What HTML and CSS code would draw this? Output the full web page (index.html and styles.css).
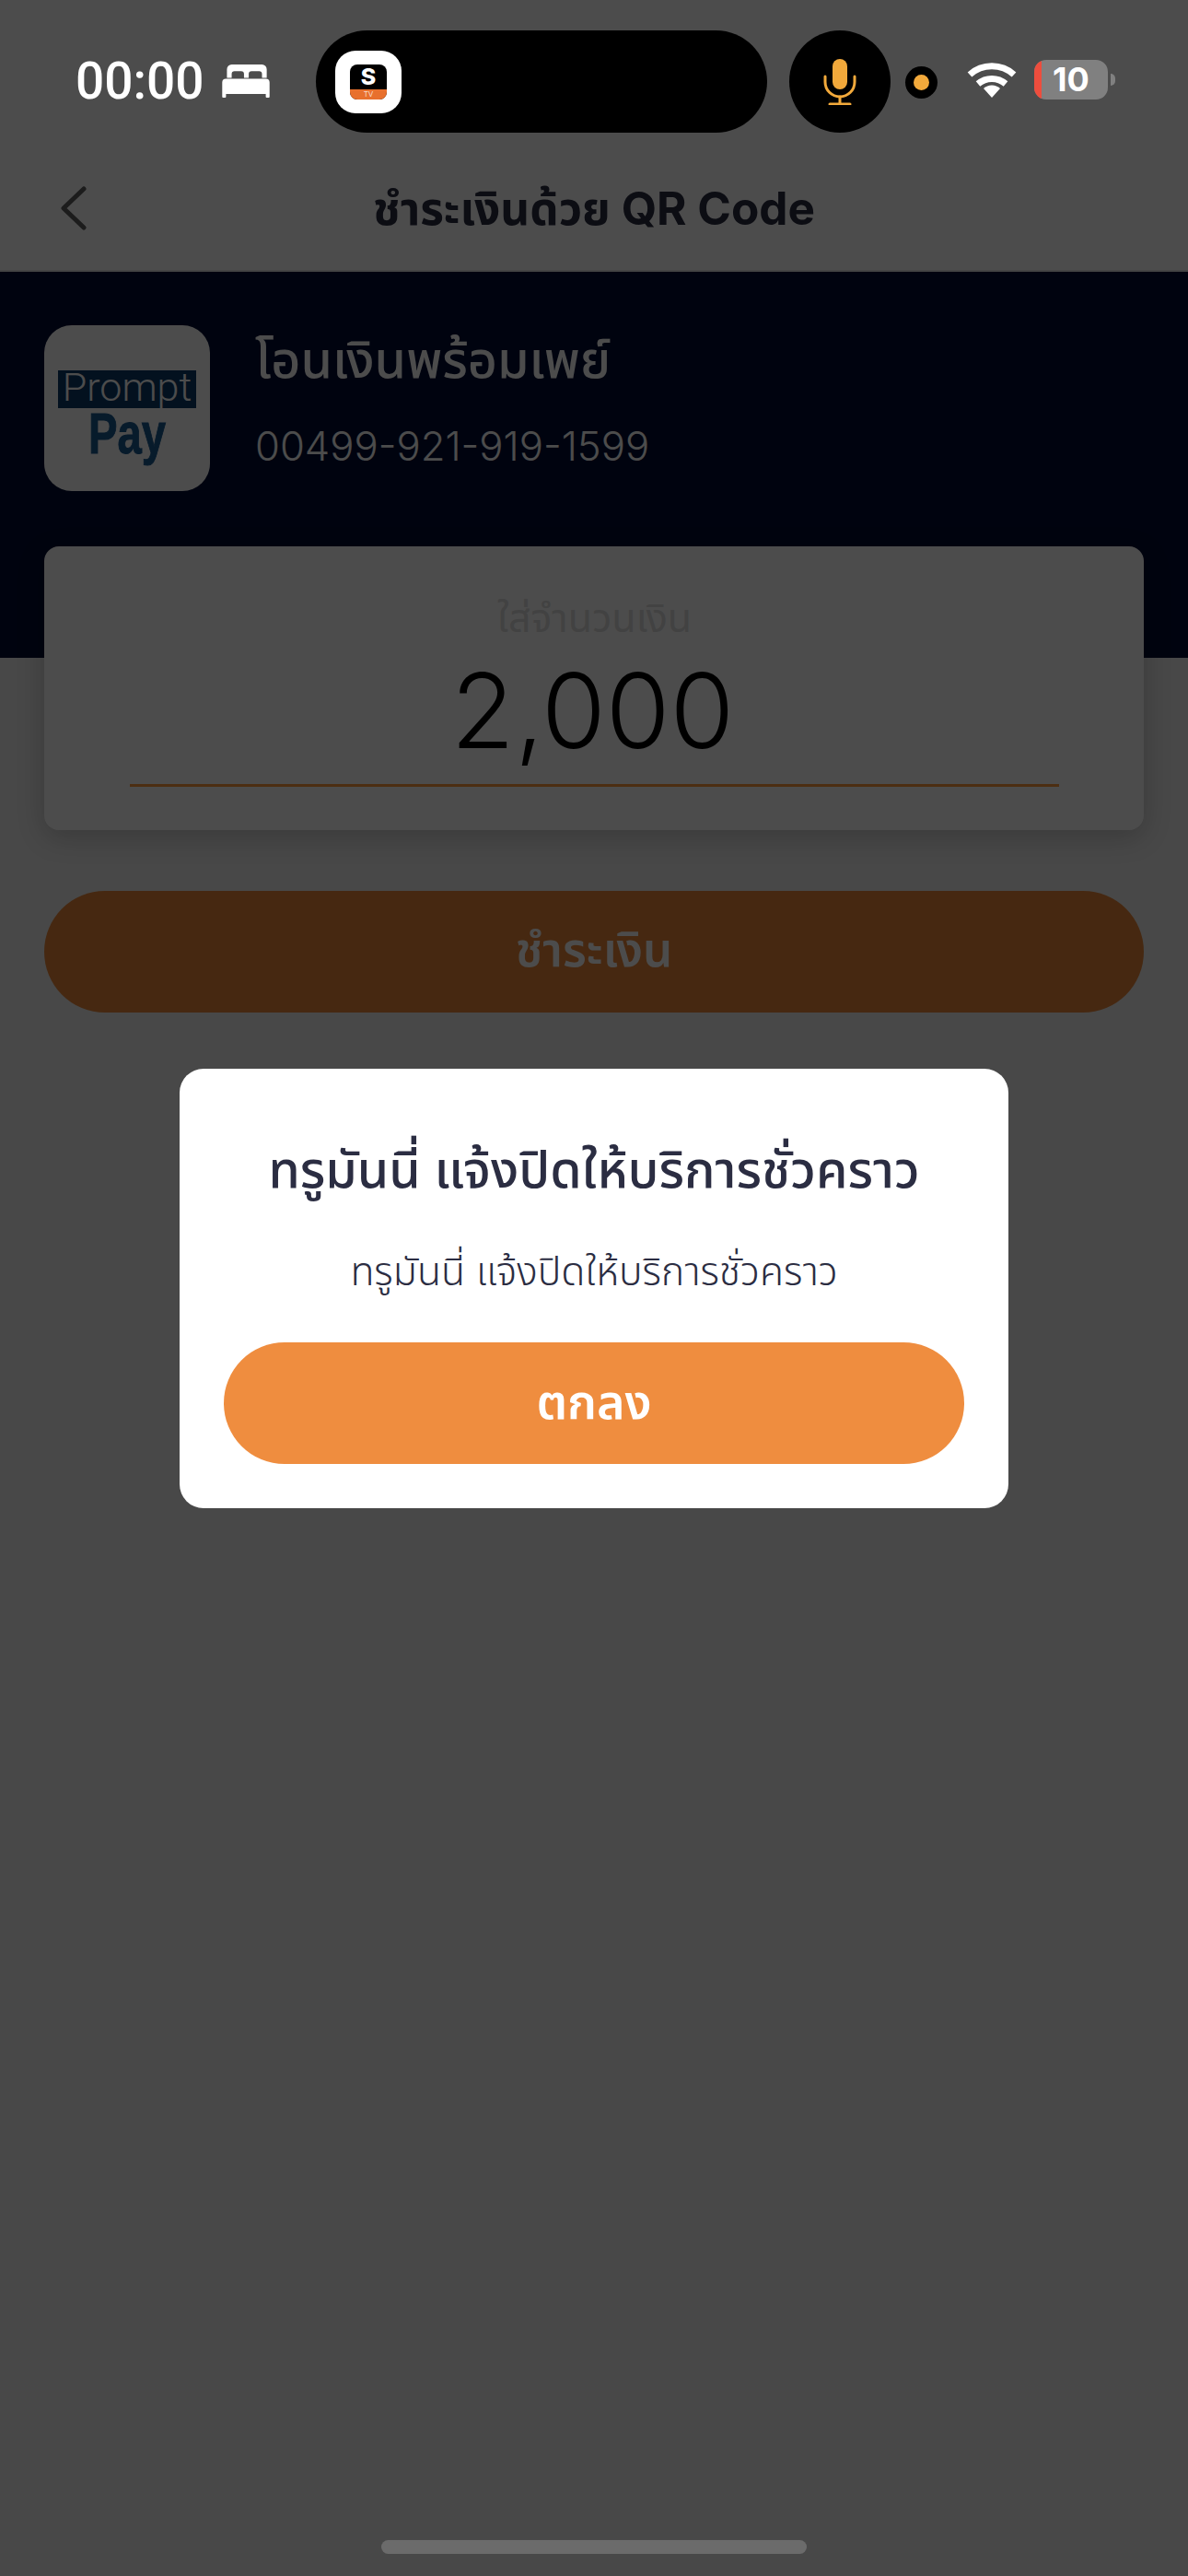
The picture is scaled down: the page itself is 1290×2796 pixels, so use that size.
FILE: index.html
```html
<!DOCTYPE html>
<html lang="th">

<head>
    <meta charset="UTF-8">
    <meta name="viewport" content="width=device-width, initial-scale=1.0">
    <title>ชำระเงินด้วย QR Code</title>
    <link rel="stylesheet" href="styles.css">
</head>

<body>
    <div class="status-bar">
        <div class="status-time">
            <span>00:00</span>
            <svg class="bed-icon" viewBox="0 0 50 35" fill="#fff">
                <path fill-rule="evenodd" d="M10 0h32a5 5 0 0 1 5 5v9H42v-4a3 3 0 0 0-3-3H31a3 3 0 0 0-3 3v4h-5v-4a3 3 0 0 0-3-3H13a3 3 0 0 0-3 3v4H5V5a5 5 0 0 1 5-5z" />
                <path d="M4 15h42a4 4 0 0 1 4 4v15a1 1 0 0 1-1 1h-2a1 1 0 0 1-1-1v-3H4v3a1 1 0 0 1-1 1H1a1 1 0 0 1-1-1V19a4 4 0 0 1 4-4z" />
            </svg>
        </div>
        <div class="island">
            <div class="app-icon">
                <div class="app-logo">
                    <span class="app-s">S</span>
                    <span class="app-tv">TV</span>
                </div>
            </div>
        </div>
        <div class="island-mic">
            <svg class="mic-icon" viewBox="0 0 36 50" fill="none" stroke="#f2a93b" stroke-width="3" stroke-linecap="round">
                <rect x="10" y="0" width="16" height="33" rx="8" fill="#f2a93b" stroke="none" />
                <path d="M2 19v6a16 16 0 0 0 32 0v-6" />
                <path d="M18 41v7" />
                <path d="M7 49h22" />
            </svg>
        </div>
        <div class="island-dot"><span></span></div>
        <svg class="wifi-icon" viewBox="0 0 54 40" fill="none" stroke="#fff" stroke-width="7">
            <path d="M3 15a36 36 0 0 1 48 0" />
            <path d="M12 25a23 23 0 0 1 30 0" />
            <path d="M27 40l-9-10a13 13 0 0 1 18 0z" fill="#fff" stroke="none" />
        </svg>
        <div class="battery">
            <div class="battery-body"><span class="battery-low"></span><span class="battery-num">10</span></div>
            <span class="battery-nub"></span>
        </div>
    </div>

    <div class="nav-bar">
        <svg class="back-icon" viewBox="0 0 28 48" fill="none" stroke="#5e5e5e" stroke-width="5" stroke-linecap="round" stroke-linejoin="round">
            <path d="M25 3L3 24l22 21" />
        </svg>
        <h1 class="nav-title">ชำระเงินด้วย QR Code</h1>
    </div>

    <div class="hero">
        <div class="pp-logo">
            <div class="pp-prompt">Prompt</div>
            <div class="pp-pay">Pay</div>
        </div>
        <div class="hero-text">
            <div class="hero-title">โอนเงินพร้อมเพย์</div>
            <div class="hero-number">00499-921-919-1599</div>
        </div>
    </div>

    <div class="content">
        <div class="amount-card">
            <div class="amount-label">ใส่จำนวนเงิน</div>
            <div class="amount-value">2,000</div>
            <div class="amount-line"></div>
        </div>
        <button class="pay-button">ชำระเงิน</button>
    </div>

    <div class="overlay">
        <div class="dialog">
            <h2 class="dialog-title">ทรูมันนี่ แจ้งปิดให้บริการชั่วคราว</h2>
            <p class="dialog-text">ทรูมันนี่ แจ้งปิดให้บริการชั่วคราว</p>
            <button class="ok-button">ตกลง</button>
        </div>
    </div>

    <div class="home-indicator"></div>
</body>

</html>
```

FILE: styles.css
```css
* {
    box-sizing: border-box;
}

body {
    margin: 0;
    width: 1290px;
    height: 2796px;
    position: relative;
    overflow: hidden;
    background: #f0f0f0;
    font-family: Inter, "Noto Sans Thai", "Noto Sans", "Liberation Sans", sans-serif;
}

/* bar background goes under the dim layer, its items stay above it */
.status-bar {
    height: 160px;
    background: #fff;
    padding: 33px 0 0 82px;
    display: flex;
    align-items: flex-start;
}

.status-bar > * {
    position: relative;
    z-index: 3;
}

.status-time {
    display: flex;
    align-items: center;
    width: 261px;
    height: 111px;
    padding-bottom: 2px;
    color: #fff;
    font-family: Roboto, sans-serif;
    font-size: 55px;
    font-weight: 500;
}

.bed-icon {
    width: 52px;
    height: 36px;
    margin-left: 19px;
}

.island {
    width: 490px;
    height: 111px;
    border-radius: 56px;
    background: #000;
    padding: 22px 0 0 21px;
}

.app-icon {
    width: 72px;
    height: 68px;
    background: #fff;
    border-radius: 22px;
    padding: 15px 16px;
}

.app-logo {
    height: 38px;
    border-radius: 8px;
    background: #000;
    display: flex;
    flex-direction: column;
    align-items: stretch;
    color: #fff;
    text-align: center;
}

.app-s {
    height: 27px;
    font-size: 25px;
    font-weight: 800;
    line-height: 27px;
}

.app-tv {
    height: 11px;
    border-radius: 0 0 8px 8px;
    background: #e8702d;
    font-size: 8px;
    line-height: 11px;
    color: #f8dccb;
}

.island-mic {
    width: 110px;
    height: 111px;
    margin-left: 24px;
    border-radius: 50%;
    background: #000;
    display: flex;
    justify-content: center;
    align-items: center;
}

.mic-icon {
    width: 36px;
    height: 50px;
}

.island-dot {
    width: 35px;
    height: 35px;
    margin: 39px 0 0 16px;
    border-radius: 50%;
    background: #000;
    display: flex;
    justify-content: center;
    align-items: center;
}

.island-dot span {
    width: 17px;
    height: 17px;
    border-radius: 50%;
    background: #f2a93b;
}

.wifi-icon {
    width: 54px;
    height: 40px;
    margin: 33px 0 0 32px;
}

.battery {
    display: flex;
    align-items: center;
    margin: 32px 0 0 19px;
}

.battery-body {
    width: 80px;
    height: 43px;
    border-radius: 13px;
    background: #808080;
    overflow: hidden;
    display: flex;
    align-items: center;
}

.battery-low {
    width: 8px;
    height: 100%;
    background: #ee4d3d;
}

.battery-num {
    width: 64px;
    text-align: center;
    color: #fff;
    font-size: 36px;
    font-weight: 700;
    line-height: 43px;
}

.battery-nub {
    width: 5px;
    height: 13px;
    margin-left: 3px;
    border-radius: 0 6px 6px 0;
    background: #808080;
}

.nav-bar {
    height: 137px;
    background: #fff;
    border-bottom: 2px solid #e4e4e4;
    padding-left: 66px;
    position: relative;
    display: flex;
    align-items: center;
    margin-top: -2px;
}

.back-icon {
    width: 28px;
    height: 48px;
}

.nav-title {
    position: absolute;
    left: 0;
    right: 0;
    margin: 0;
    padding-top: 6px;
    text-align: center;
    font-size: 49.5px;
    font-weight: 700;
    color: #2b2d42;
}

.hero {
    height: 419px;
    background: #000d32;
    padding: 58px 48px 0;
    display: flex;
    align-items: flex-start;
}

.pp-logo {
    width: 180px;
    height: 180px;
    border-radius: 30px;
    background: #fff;
    padding-top: 49px;
    display: flex;
    flex-direction: column;
    align-items: center;
}

.pp-prompt {
    width: 150px;
    height: 41px;
    background: #0c3a68;
    color: #fff;
    text-align: center;
    font-family: Roboto, "Liberation Sans", sans-serif;
    font-size: 43px;
    font-weight: 300;
    line-height: 36px;
}

.pp-pay {
    color: #1a5a90;
    font-family: "Liberation Sans", sans-serif;
    font-size: 63px;
    font-weight: 700;
    line-height: 54px;
    -webkit-text-stroke: 1px #1a5a90;
    transform: scaleX(0.75);
}

.hero-text {
    margin-left: 49px;
    color: #fff;
}

.hero-title {
    margin-top: 12px;
    font-size: 55.5px;
    font-weight: 500;
    line-height: 50px;
}

.hero-number {
    margin-top: 45px;
    font-size: 43.6px;
    font-weight: 300;
    line-height: 50px;
}

.content {
    padding: 0 48px;
    display: flex;
    flex-direction: column;
}

.amount-card {
    height: 308px;
    margin-top: -121px;
    padding: 53px 92px 0 93px;
    background: #fff;
    border-radius: 16px;
    box-shadow: 0 8px 30px rgba(0, 0, 0, 0.2);
    display: flex;
    flex-direction: column;
    align-items: center;
}

.amount-label {
    font-size: 43px;
    line-height: 48px;
    color: #dcdcdc;
}

.amount-value {
    margin: 17px 4px 0 0;
    font-size: 113px;
    font-weight: 300;
    line-height: 120px;
    color: #000;
}

.amount-line {
    width: 100%;
    height: 3px;
    margin-top: 20px;
    background: #ff9b3f;
}

.pay-button {
    height: 132px;
    margin-top: 66px;
    padding-top: 2px;
    border: none;
    border-radius: 66px;
    background: #ea8739;
    color: #fff;
    font-family: inherit;
    font-size: 51px;
    font-weight: 600;
}

.overlay {
    position: absolute;
    top: 0;
    left: 0;
    width: 100%;
    height: 100%;
    z-index: 2;
    background: rgba(0, 0, 0, 0.7);
    display: flex;
    justify-content: center;
    align-items: center;
}

.dialog {
    width: 900px;
    height: 477px;
    padding: 74px 48px 0;
    background: #fff;
    border-radius: 26px;
    text-align: center;
    display: flex;
    flex-direction: column;
}

.dialog-title {
    margin: 0;
    font-size: 55.4px;
    font-weight: 500;
    line-height: 70px;
    color: #2b2d42;
}

.dialog-text {
    margin: 48px 0 0;
    font-size: 42.7px;
    font-weight: 350;
    line-height: 56px;
    color: #2b2d42;
}

.ok-button {
    height: 132px;
    margin-top: 49px;
    padding-top: 4px;
    border: none;
    border-radius: 66px;
    background: #ef8d3f;
    color: #fff;
    font-family: inherit;
    font-size: 52px;
    font-weight: 600;
}

.home-indicator {
    position: absolute;
    left: 414px;
    bottom: 24px;
    width: 462px;
    height: 15px;
    z-index: 3;
    border-radius: 8px;
    background: #6b6b6b;
}
```
